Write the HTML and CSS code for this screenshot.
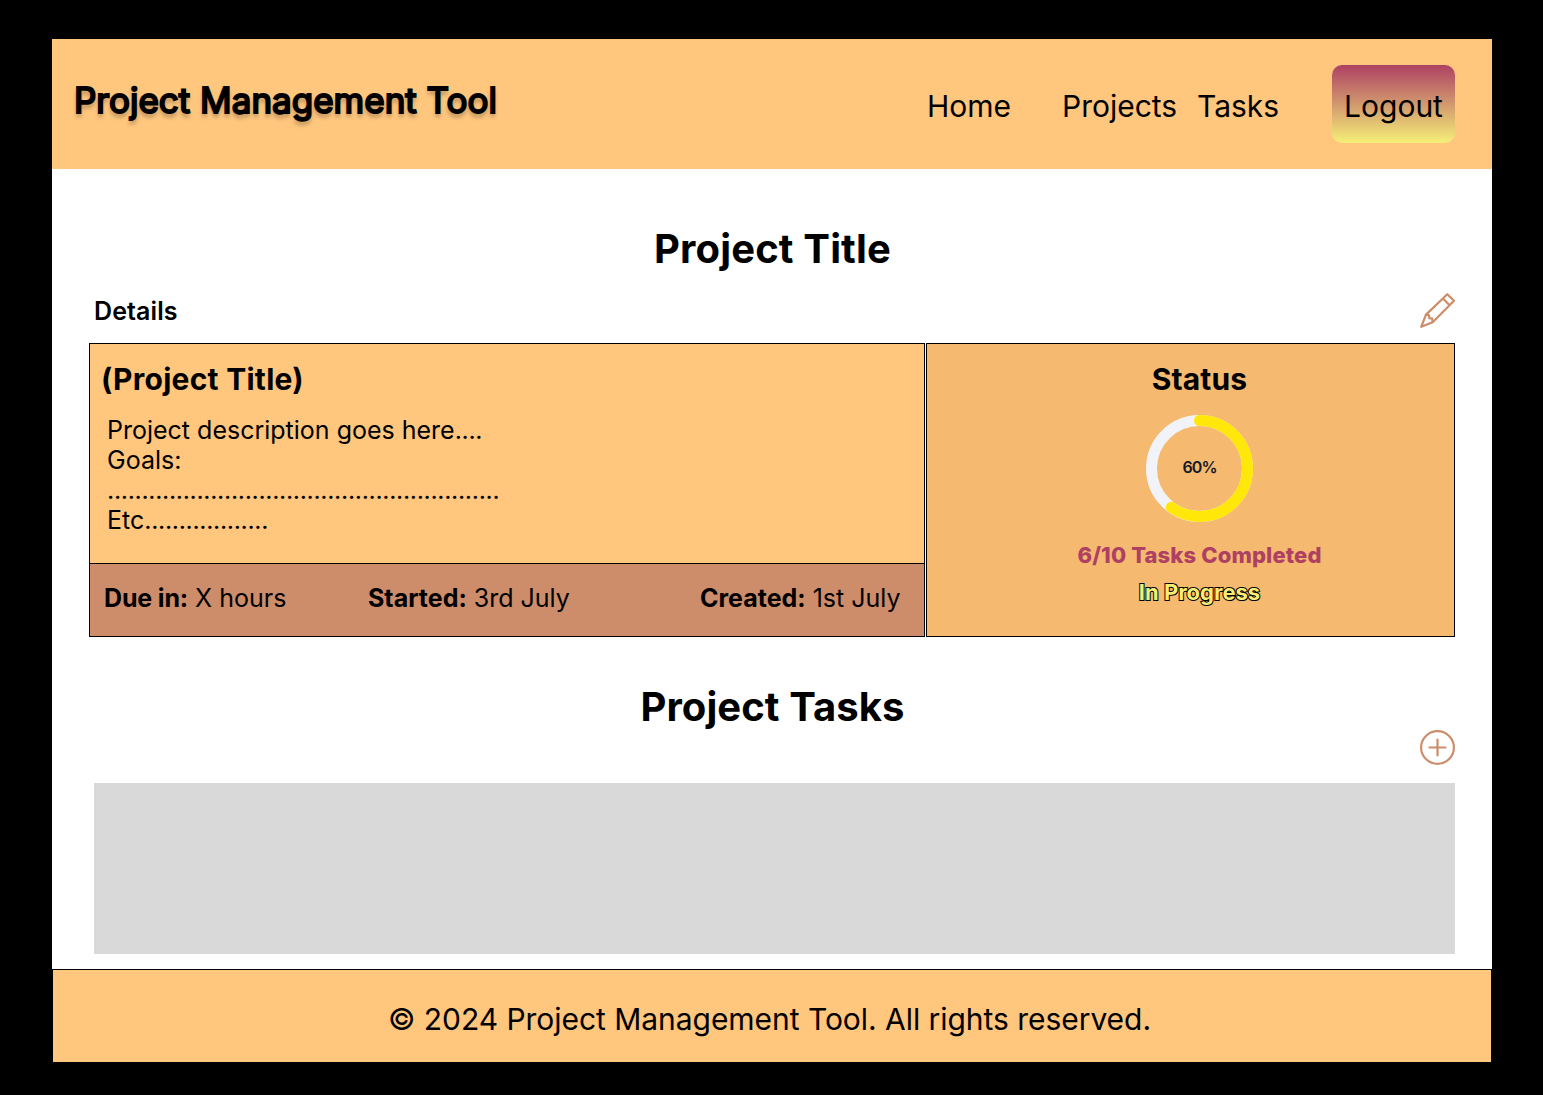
FILE: index.html
```html
<!DOCTYPE html>
<html lang="en">
<head>
<meta charset="utf-8">
<title>Project Management Tool</title>
<link rel="stylesheet" href="styles.css">
</head>
<body>
<div class="page">
  <header class="header">
    <div class="brand">Project Management Tool</div>
    <nav class="nav">
      <a class="nav-home">Home</a>
      <a class="nav-projects">Projects</a>
      <a class="nav-tasks">Tasks</a>
      <a class="logout">Logout</a>
    </nav>
  </header>
  <main class="main">
    <h1 class="title">Project Title</h1>
    <div class="details-bar">
      <h2 class="details-label">Details</h2>
      <svg class="icon" viewBox="0 0 35 35" fill="none" stroke="#cd8c6a" stroke-width="2.2" stroke-linejoin="round">
        <path d="M1.2 33.8 6 21.6 27.3 1.2 34 7.7 12.7 29.3Z"/>
        <path d="M22.9 5.4 29.6 12.2M6 21.6 9 22.3 9.3 25.1 12.2 25.7 12.7 29.3"/>
      </svg>
    </div>
    <section class="cards">
      <article class="project">
        <div class="project-body">
          <h3 class="project-name">(Project Title)</h3>
          <p class="description">Project description goes here<span class="dots">....</span><br>Goals:<br><span class="dots">.........................................................</span><br>Etc<span class="dots">..................</span></p>
        </div>
        <div class="dates">
          <span class="due"><b>Due in:</b> X hours</span>
          <span class="started"><b>Started:</b> 3rd July</span>
          <span class="created"><b>Created:</b> 1st July</span>
        </div>
      </article>
      <article class="status">
        <h3 class="status-title">Status</h3>
        <div class="progress">
          <svg class="ring" viewBox="0 0 108 108" fill="none" stroke-width="11">
            <circle cx="54.5" cy="54.5" r="48" stroke="#f2f3f8"/>
            <circle cx="54.5" cy="54.5" r="48" stroke="#ffe70a" stroke-linecap="round" pathLength="100" stroke-dasharray="60 100" transform="rotate(-90 54.5 54.5)"/>
          </svg>
          <span class="percent">60%</span>
        </div>
        <p class="completed">6/10 Tasks Completed</p>
        <p class="state">In Progress</p>
      </article>
    </section>
    <h2 class="title tasks-title">Project Tasks</h2>
    <div class="tasks-bar">
      <svg class="icon" viewBox="0 0 35 35" fill="none" stroke="#cd8c6a" stroke-width="2.2" stroke-linecap="round">
        <circle cx="17.5" cy="17.5" r="16.4"/>
        <path d="M17.5 9.5v16M9.5 17.5h16"/>
      </svg>
    </div>
    <div class="task-list"></div>
  </main>
  <footer class="footer">© 2024 Project Management Tool. All rights reserved.</footer>
</div>
</body>
</html>
```
FILE: styles.css
```css
* { box-sizing: border-box; }
body { margin: 0; background: #000; color: #000; font-family: Inter, "Liberation Sans", sans-serif; }
h1, h2, h3, p { margin: 0; }
.page { width: 1440px; height: 1024px; margin: 39px 0 32px 52px; background: #fff; display: flex; flex-direction: column; }
.header { height: 130px; flex: none; background: #ffc67d; display: flex; justify-content: space-between; align-items: flex-start; padding: 26px 37px 0 22px; }
.brand { font-size: 35px; line-height: 42px; margin-top: 14px; -webkit-text-stroke: 2px #000; text-shadow: 0 4px 4px rgba(0, 0, 0, .35); white-space: nowrap; }
.nav { display: flex; align-items: center; height: 78px; font-size: 30px; line-height: 36px; white-space: nowrap; }
.nav a { display: block; padding-top: 4px; }
.nav .nav-home { width: 135px; }
.nav .nav-projects { width: 135px; }
.nav .nav-tasks { width: 135px; }
.nav .logout { width: 123px; height: 78px; padding-top: 23px; text-align: center; border-radius: 10px; background: linear-gradient(#ae4163, #f5ef78); }
.main { height: 800px; flex: none; padding: 0 37px; }
.title { font-size: 40px; line-height: 48px; font-weight: 700; letter-spacing: .15px; text-align: center; padding: 56px 0 0 1px; }
.details-bar { display: flex; justify-content: space-between; align-items: flex-start; margin-top: 20px; height: 50px; padding-left: 5px; }
.details-label { font-size: 25px; line-height: 30px; font-weight: 600; letter-spacing: .1px; margin-top: 3px; }
.icon { width: 35px; height: 35px; display: block; }
.cards { display: grid; grid-template-columns: 836px 529px; gap: 1px; height: 294px; }
.project, .status { border: 1px solid #000; }
.project-body { height: 219px; background: #ffc67d; padding: 17px 12px 0 11px; }
.project-name { font-size: 30px; line-height: 36px; font-weight: 700; letter-spacing: .25px; }
.description { font-size: 25px; line-height: 30px; font-weight: 400; margin: 18px 0 0 6px; white-space: nowrap; }
.dots { letter-spacing: -.32px; }
.dates { height: 73px; border-top: 1px solid #000; background: #cd8c6a; display: flex; padding: 19px 0 0 14px; font-size: 25px; line-height: 30px; font-weight: 400; white-space: nowrap; }
.dates b { font-weight: 700; }
.due { width: 264px; }
.due b { letter-spacing: -.15px; }
.started { width: 332px; }
.status { background: #f5b970; display: flex; flex-direction: column; align-items: center; padding: 17px 0 0 18px; }
.status-title { font-size: 30px; line-height: 36px; font-weight: 700; letter-spacing: .15px; }
.progress { display: grid; place-items: center; width: 108px; height: 108px; margin: 17px 1px 0 0; }
.ring, .percent { grid-area: 1 / 1; }
.ring { width: 108px; height: 108px; }
.percent { font-size: 16px; line-height: 20px; font-weight: 600; letter-spacing: -.9px; margin: -2px 0 0 1px; color: #111827; }
.completed { font-size: 22px; line-height: 27px; font-weight: 800; letter-spacing: .12px; color: #ae4163; margin-top: 20px; }
.state { font-size: 22px; line-height: 27px; font-weight: 700; color: #f5ef78; margin-top: 10px; -webkit-text-stroke: 2px #000; paint-order: stroke fill; }
.tasks-title { padding-top: 46px; letter-spacing: .08px; }
.tasks-bar { display: flex; justify-content: flex-end; height: 53px; margin-top: -1px; }
.task-list { height: 171px; margin-left: 5px; background: #d9d9d9; }
.footer { height: 94px; flex: none; border: 1px solid #000; background: #ffc67d; font-size: 30px; line-height: 36px; letter-spacing: -.04px; text-align: center; padding: 31px 5px 0 0; }
```
